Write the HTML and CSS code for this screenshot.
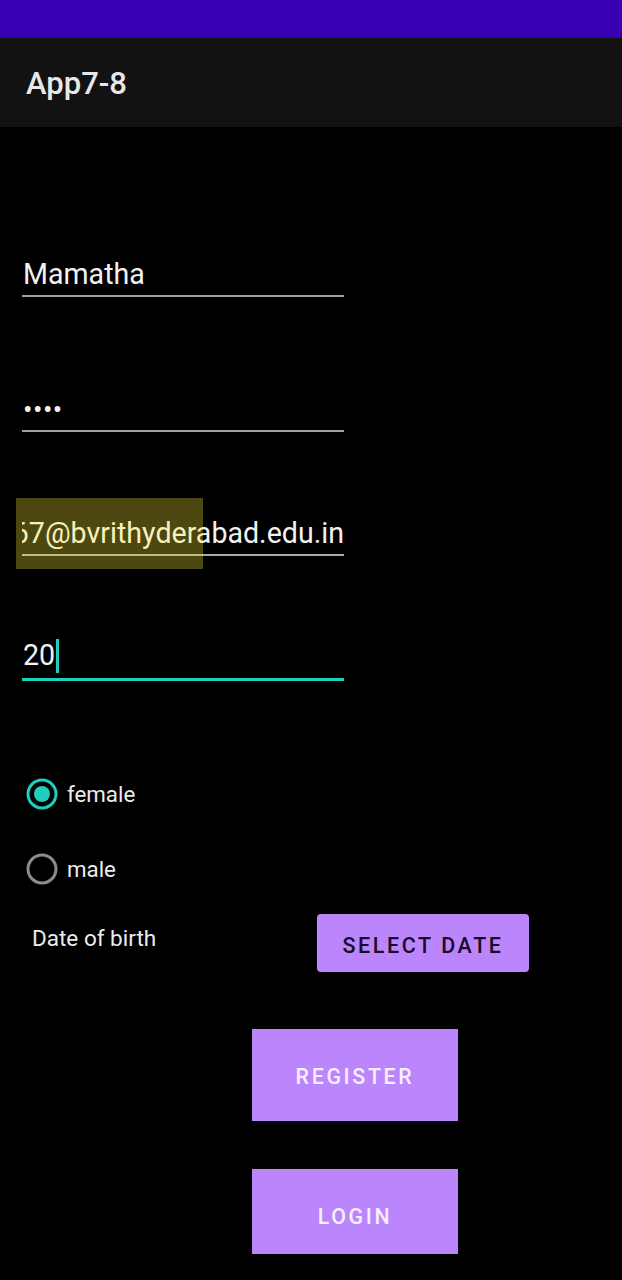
FILE: index.html
```html
<!DOCTYPE html>
<html>
<head>
<meta charset="utf-8">
<link rel="stylesheet" href="styles.css">
</head>
<body>
<div class="status"></div>
<header class="appbar"><span class="title">App7-8</span></header>
<main class="content">
  <div class="field f1"><span class="val">Mamatha</span></div>
  <div class="field f2"><span class="val dots">••••</span></div>
  <div class="field f3"><span class="val email">mamatha.567@bvrithyderabad.edu.in</span></div>
  <div class="field f4 focused"><span class="val">20</span><span class="cursor"></span></div>
  <div class="radios">
    <div class="radio">
      <svg width="32" height="32" viewBox="0 0 32 32"><circle cx="16" cy="16" r="14" fill="none" stroke="#1ecfbd" stroke-width="3"/><circle cx="16" cy="16" r="8" fill="#1ecfbd"/></svg>
      <span class="rlabel">female</span>
    </div>
    <div class="radio">
      <svg width="32" height="32" viewBox="0 0 32 32"><circle cx="16" cy="16" r="14" fill="none" stroke="#8c8c8c" stroke-width="3"/></svg>
      <span class="rlabel">male</span>
    </div>
  </div>
  <div class="daterow">
    <span class="dlabel">Date of birth</span>
    <button class="btn-date">SELECT DATE</button>
  </div>
  <button class="btn-big btn-register">REGISTER</button>
  <button class="btn-big btn-login">LOGIN</button>
  <div class="highlight"></div>
</main>
</body>
</html>
```
FILE: styles.css
```css
html, body {
  margin: 0;
  padding: 0;
  background: #000;
  font-family: Roboto, "Noto Sans", sans-serif;
  width: 622px;
  height: 1280px;
  overflow: hidden;
}
.status {
  height: 38px;
  background: #3700b3;
}
.appbar {
  height: 89px;
  background: #121212;
  display: flex;
  align-items: center;
  padding-left: 26px;
  box-sizing: border-box;
}
.title {
  color: #e8e8e8;
  font-size: 31px;
  font-weight: 500;
  line-height: 36px;
  margin-top: 2px;
}
.content {
  position: relative;
  padding: 131px 0 0 22px;
  display: flex;
  flex-direction: column;
  align-items: flex-start;
}
.field {
  width: 322px;
  border-bottom: 2px solid #a0a0a0;
  padding-bottom: 4px;
  font-size: 28.6px;
  line-height: 33px;
  color: #f2f2f2;
  display: flex;
  overflow: hidden;
  white-space: nowrap;
}
.val { padding-left: 1px; }
.f2 { margin-top: 96px; }
.f3 { margin-top: 85px; justify-content: flex-end; border-bottom-color: #a8a8a8; }
.f4 { margin-top: 83px; }
.dots { font-size: 28px; letter-spacing: 0.5px; }
.focused {
  border-bottom: 3px solid #1ecfbd;
  padding-bottom: 5px;
}
.cursor {
  display: inline-block;
  width: 3px;
  height: 37px;
  background: #1ecfbd;
  margin-left: 1px;
  margin-top: -3px;
}
.radios {
  margin-top: 75px;
  display: flex;
  flex-direction: column;
}
.radio {
  height: 75px;
  display: flex;
  align-items: center;
  padding-left: 4px;
  gap: 9px;
}
.rlabel {
  color: #ececec;
  font-size: 22.3px;
  line-height: 26px;
  margin-top: 1px;
}
.daterow {
  margin-top: 8px;
  display: flex;
  align-items: flex-start;
}
.dlabel {
  color: #ececec;
  font-size: 22.5px;
  line-height: 26px;
  width: 285px;
  padding-left: 10px;
  margin-top: 11px;
}
.btn-date {
  width: 212px;
  height: 58px;
  border: none;
  border-radius: 4px;
  background: #bb86fc;
  color: #1a0c28;
  font-family: Roboto, "Noto Sans", sans-serif;
  font-size: 21.5px;
  font-weight: 500;
  letter-spacing: 2.6px;
  padding: 4px 0 0;
}
.btn-big {
  margin-left: 230px;
  width: 206px;
  border: none;
  border-radius: 0;
  background: #bb86fc;
  color: #f6efff;
  font-family: Roboto, "Noto Sans", sans-serif;
  font-size: 21.3px;
  font-weight: 500;
  letter-spacing: 2.7px;
  padding: 2px 0 0;
}
.btn-register { margin-top: 57px; height: 92px; }
.btn-login { margin-top: 48px; height: 85px; padding-top: 10px; }
.highlight {
  position: absolute;
  left: 16px;
  top: 371px;
  width: 187px;
  height: 71px;
  background: rgba(255, 240, 50, 0.3);
}
```
